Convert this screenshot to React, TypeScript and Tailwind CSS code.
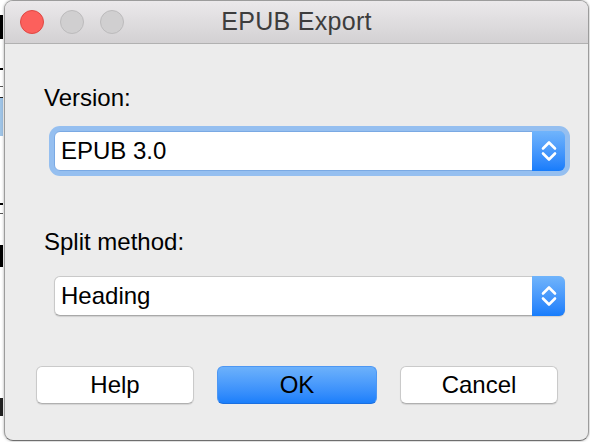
import React from "react";

function Chevrons() {
  return (
    <svg width="16" height="24" viewBox="0 0 16 24" fill="none">
      <path d="M2 9.5 L8 3.5 L14 9.5" stroke="white" strokeWidth="2.6" strokeLinecap="round" strokeLinejoin="round" />
      <path d="M2 14.5 L8 20.5 L14 14.5" stroke="white" strokeWidth="2.6" strokeLinecap="round" strokeLinejoin="round" />
    </svg>
  );
}

function Select({ value, focused }: { value: string; focused?: boolean }) {
  return (
    <div
      className={
        "ml-[49px] w-[511px] h-[40px] flex items-stretch rounded-[6px] bg-white " +
        (focused
          ? "border border-[#7aa9e3] shadow-[0_0_0_5px_#95bff0]"
          : "border border-[#c9c9c9] border-b-[#a9a9a9] shadow-[0_1px_1px_rgba(0,0,0,0.12)]")
      }
    >
      <div className="flex-1 flex items-center pl-[6px] text-[24px] text-black leading-none">{value}</div>
      <div className="w-[33px] -my-px -mr-px flex items-center justify-center rounded-r-[6px] bg-gradient-to-b from-[#70b4fb] to-[#167cfb]">
        <Chevrons />
      </div>
    </div>
  );
}

export default function App() {
  return (
    <div className="relative w-[590px] h-[442px] bg-white overflow-hidden font-['Liberation_Sans','Helvetica',sans-serif]">
      {/* background document slivers */}
      <div className="absolute left-0 top-[15px] w-[3px] h-[24px] bg-black" />
      <div className="absolute left-0 top-[68px] w-[3px] h-[2px] bg-black" />
      <div className="absolute left-0 top-[86px] w-[3px] h-[1px] bg-[#555]" />
      <div className="absolute left-0 top-[97px] w-[3px] h-[39px] bg-[#9fc4e6] border-t border-[#222]" />
      <div className="absolute left-0 top-[203px] w-[3px] h-[2px] bg-black" />
      <div className="absolute left-0 top-[213px] w-[3px] h-[1px] bg-[#555]" />
      <div className="absolute left-0 top-[245px] w-[3px] h-[22px] bg-black" />
      <div className="absolute left-0 top-[398px] w-[3px] h-[18px] bg-[#222]" />

      {/* window */}
      <div className="absolute left-[4px] top-0 w-[585px] h-[441px] flex flex-col rounded-[9px] border border-[#9c9c9c] border-b-[#6e6e6e] bg-[#ececec] overflow-hidden shadow-[0_0_3px_rgba(0,0,0,0.35)]">
        {/* title bar */}
        <div className="relative h-[43px] shrink-0 flex items-center bg-gradient-to-b from-[#ebe9eb] to-[#d3d1d3] border-b border-[#b1b1b1]">
          <div className="flex gap-[16px] pl-[15px]">
            <div className="w-[24px] h-[24px] rounded-full bg-[#fc605c] border border-[#df4843]" />
            <div className="w-[24px] h-[24px] rounded-full bg-[#d0cfd0] border border-[#bcbbbc]" />
            <div className="w-[24px] h-[24px] rounded-full bg-[#d0cfd0] border border-[#bcbbbc]" />
          </div>
          <div className="absolute inset-0 flex items-center justify-center text-[25px] text-[#3d3d3d] tracking-[0.3px]">
            EPUB Export
          </div>
        </div>

        {/* body */}
        <div className="flex flex-col pt-[40px]">
          <div className="ml-[39px] text-[24px] leading-[28px] text-black">Version:</div>
          <div className="mt-[19px]">
            <Select value="EPUB 3.0" focused />
          </div>
          <div className="mt-[57px] ml-[39px] text-[24px] leading-[28px] text-black">Split method:</div>
          <div className="mt-[20px]">
            <Select value="Heading" />
          </div>
          <div className="mt-[50px] ml-[31px] flex gap-[23px]">
            <button className="w-[158px] h-[38px] rounded-[6px] bg-white border border-[#cacaca] border-b-[#b0b0b0] shadow-[0_1px_1px_rgba(0,0,0,0.1)] text-[24px] text-black flex items-center justify-center">
              Help
            </button>
            <button className="w-[160px] h-[38px] rounded-[6px] bg-gradient-to-b from-[#6cb1fb] to-[#1a7ffb] border border-[#4d97f3] border-b-[#1a6fe0] text-[24px] text-black flex items-center justify-center">
              OK
            </button>
            <button className="w-[158px] h-[38px] rounded-[6px] bg-white border border-[#cacaca] border-b-[#b0b0b0] shadow-[0_1px_1px_rgba(0,0,0,0.1)] text-[24px] text-black flex items-center justify-center">
              Cancel
            </button>
          </div>
        </div>
      </div>
    </div>
  );
}
